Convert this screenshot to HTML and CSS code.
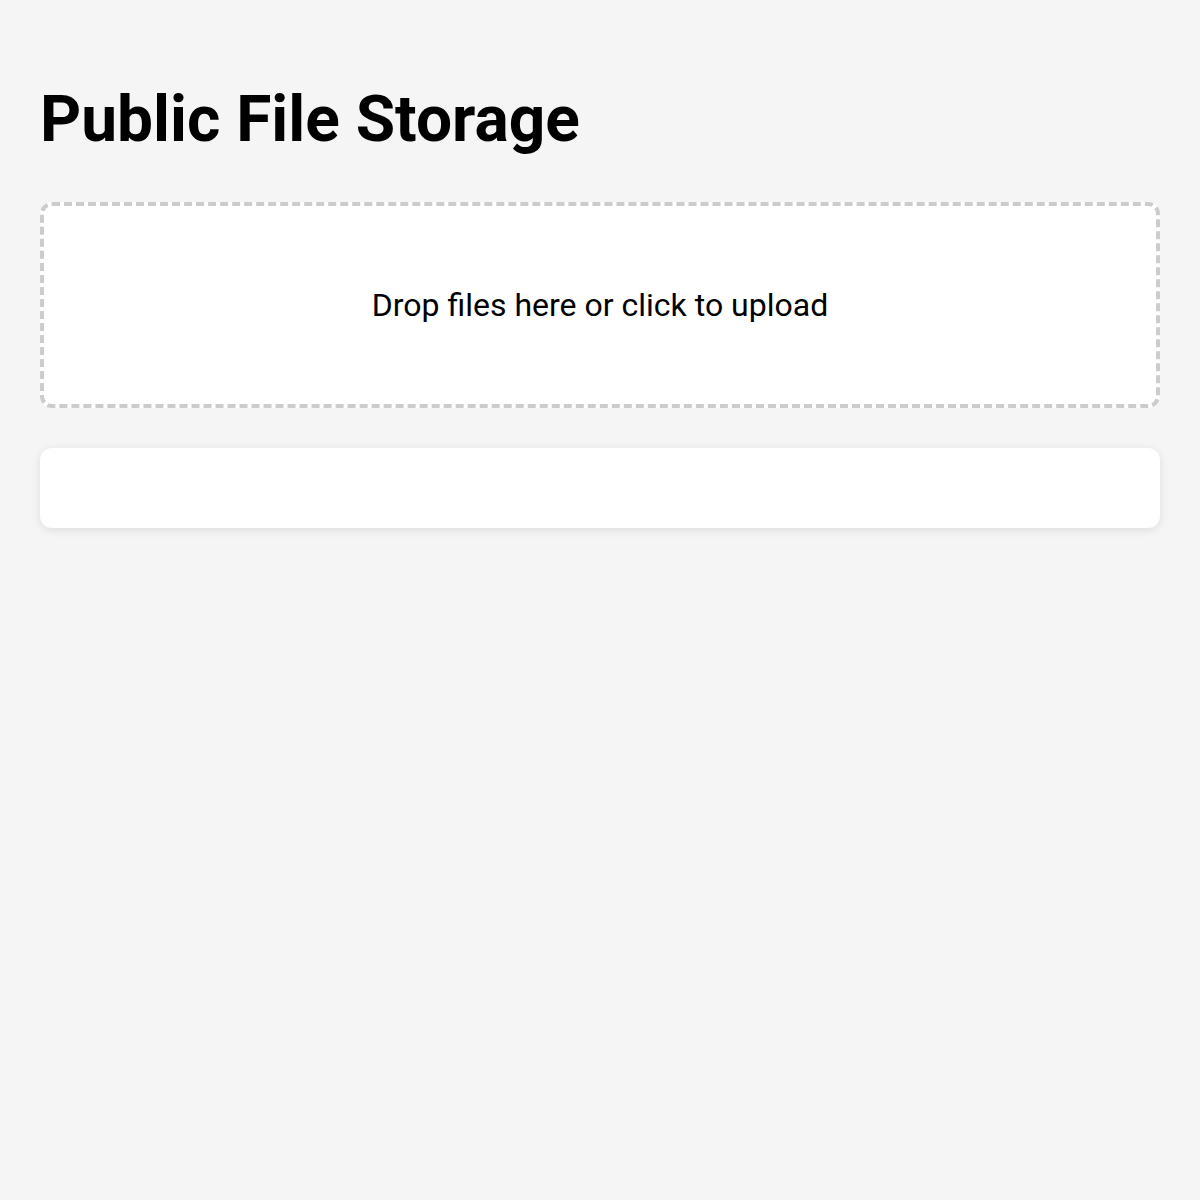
FILE: index.html
```html
<!DOCTYPE html>
<html>
<head>
<meta charset="utf-8">
<link rel="stylesheet" href="styles.css">
</head>
<body>
<div class="container">
  <h1 class="title">Public File Storage</h1>
  <div class="dropzone">Drop files here or click to upload</div>
  <div class="file-list"></div>
</div>
</body>
</html>
```

FILE: styles.css
```css
html, body {
  margin: 0;
  padding: 0;
  background: #f5f5f5;
  font-family: Roboto, "Liberation Sans", sans-serif;
  color: #000;
}
.container {
  padding: 40px;
  display: flex;
  flex-direction: column;
}
.title {
  font-size: 64px;
  font-weight: 700;
  margin: 42px 0 45px;
  line-height: 75px;
}
.dropzone {
  background: #fff;
  border: 4px dashed #ccc;
  border-radius: 12px;
  padding: 80px 20px;
  text-align: center;
  font-size: 32px;
  line-height: 38px;
}
.file-list {
  margin-top: 40px;
  background: #fff;
  border-radius: 12px;
  height: 80px;
  box-shadow: 0 2px 10px rgba(0,0,0,0.1);
}
```
